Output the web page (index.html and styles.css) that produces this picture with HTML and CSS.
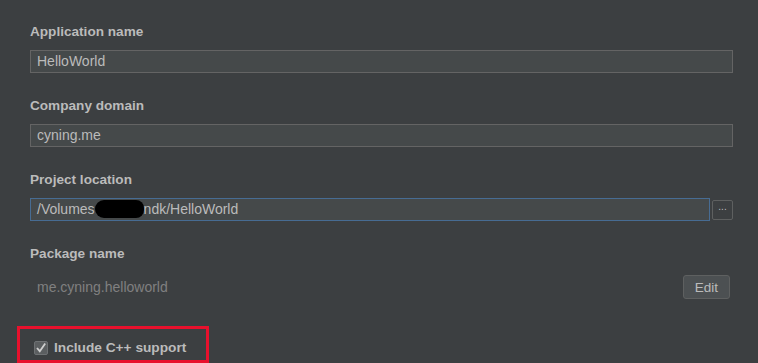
FILE: index.html
```html
<!DOCTYPE html>
<html lang="en">
<head>
    <meta charset="UTF-8">
    <title>Configure your new project</title>
    <link rel="stylesheet" href="styles.css">
</head>
<body>
    <div class="form-panel">
        <!-- Nom de l'application -->
        <div class="field">
            <label class="field-label">Application name</label>
            <div class="text-input">HelloWorld</div>
        </div>

        <div class="field">
            <label class="field-label">Company domain</label>
            <div class="text-input">cyning.me</div>
        </div>

        <div class="field">
            <label class="field-label">Project location</label>
            <div class="input-row">
                <div class="text-input focused">/Volumes<span class="redacted"></span>ndk/HelloWorld</div>
                <button class="browse-btn">...</button>
            </div>
        </div>

        <div class="field">
            <label class="field-label">Package name</label>
            <div class="package-row">
                <span class="package-value">me.cyning.helloworld</span>
                <button class="edit-btn">Edit</button>
            </div>
        </div>

        <div class="highlight">
            <svg class="checkbox" width="14" height="14" viewBox="0 0 14 14">
                <rect x="0.5" y="0.5" width="13" height="13" rx="1.5" fill="#5b5e60" stroke="#6e7173"/>
                <path d="M3 7 L5.8 10.2 L11.2 2.6" fill="none" stroke="#cfcfcf" stroke-width="1.8"/>
            </svg>
            <span class="checkbox-label">Include C++ support</span>
        </div>
    </div>
</body>
</html>
```

FILE: styles.css
```css
body {
    margin: 0;
    background: #3c3f41;
    font-family: 'Liberation Sans', Arial, sans-serif;
    color: #bbbbbb;
    overflow: hidden;
}

.form-panel {
    display: flex;
    flex-direction: column;
    padding: 24px 25px 0 30px;
}

.field {
    display: flex;
    flex-direction: column;
    margin-bottom: 25px;
}

.field-label {
    font-size: 13.6px;
    font-weight: bold;
    line-height: 16px;
    margin-bottom: 10px;
}

.text-input {
    height: 21px;
    line-height: 21px;
    background: #45494a;
    border: 1px solid #646464;
    padding: 0 6px;
    font-size: 14px;
    color: #bbbbbb;
    white-space: nowrap;
}

.text-input.focused {
    flex: 1;
    border-color: #476c93;
}

.redacted {
    display: inline-block;
    width: 49px;
    height: 18px;
    vertical-align: middle;
    margin-top: -2px;
    background: #000;
    border-radius: 9px 8px 8px 9px;
}

.input-row {
    display: flex;
    align-items: center;
    gap: 2px;
}

.browse-btn {
    width: 21px;
    height: 20px;
    padding: 0 0 5px 0;
    background: #3c3f41;
    border: 1px solid #5e6060;
    border-radius: 2px;
    color: #bbbbbb;
    font-size: 10px;
    line-height: 10px;
}

.package-row {
    display: flex;
    justify-content: space-between;
    align-items: center;
    margin-top: 3px;
    padding-right: 3px;
}

.package-value {
    font-size: 14px;
    color: #808080;
    padding-left: 7px;
}

.edit-btn {
    width: 47px;
    height: 24px;
    background: #4c5052;
    border: 1px solid #5e6060;
    border-radius: 3px;
    color: #bbbbbb;
    font-family: 'Liberation Sans', Arial, sans-serif;
    font-size: 13.5px;
    padding: 0;
}

.highlight {
    display: flex;
    align-items: center;
    gap: 6px;
    width: 172px;
    margin: 2px 0 0 -13px;
    padding: 11px 0 4px 14px;
    border: 3px solid #e8112d;
}

.checkbox {
    flex: none;
}

.checkbox-label {
    font-size: 13.7px;
    font-weight: bold;
    line-height: 16px;
}
```
